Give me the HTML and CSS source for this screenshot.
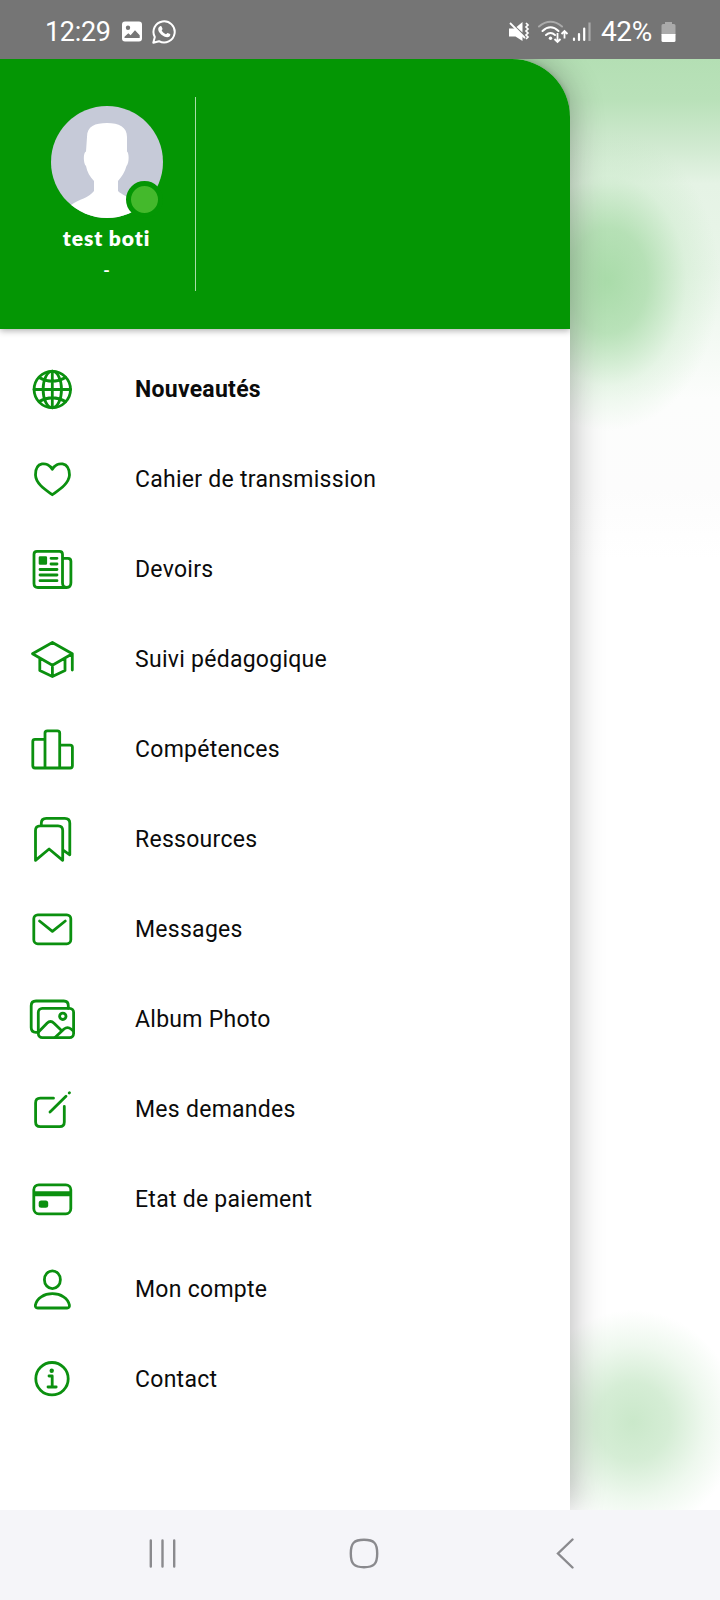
FILE: index.html
```html
<!DOCTYPE html>
<html lang="fr">
<head>
<meta charset="utf-8">
<title>Menu</title>
<link rel="stylesheet" href="styles.css">
</head>
<body>
<div class="screen">
  <header class="status">
    <div class="status-left">
      <span class="clock">12:29</span>
      <svg class="s-image" width="22" height="22" viewBox="0 0 22 22"><path fill="#fff" fill-rule="evenodd" d="M4 .5h14a3 3 0 0 1 3 3v14a3 3 0 0 1-3 3H4a3 3 0 0 1-3-3v-14a3 3 0 0 1 3-3zM7 4.500a2.200 2.200 0 1 0 0 4.400a2.200 2.200 0 1 0 0-4.400zM3.500 17h15.200v-2.800l-4.700-5-4.400 5-2.300-2-3.800 3.600z"/></svg>
      <svg class="s-whats" width="24" height="24" viewBox="0 0 24 24"><path fill="none" stroke="#fff" stroke-width="2" stroke-linejoin="round" d="M1.300 22.700l1.500-5.700A10.600 10.600 0 1 1 7 21.200z"/><path fill="#fff" d="M8 6.200c.8-.4 1.300-.2 1.600.4l.9 2.100c.2.600-.8 1.500-.8 1.800 1 1.900 2.400 3 4.200 3.700.5 0 1.200-1.400 1.700-1.300l2.500 1.200c.5.300.1 2-.9 2.700-3.600 2.100-11.500-3.500-11-8 .2-1.300.9-2.200 1.800-2.600z"/></svg>
    </div>
    <div class="status-right">
      <svg width="22" height="22" viewBox="0 0 22 22"><path fill="#fff" d="M1 7.500h3.500l3.500.1 6.500 6.500V20L7.500 15.500H1zM8.500 6L14.500 1v10.500z"/><path d="M2 2l15 15" stroke="#fff" stroke-width="1.800"/><path d="M18 2l2 2-2 2 2 2-2 2 2 2-2 2 2 2-2 2" fill="none" stroke="#fff" stroke-width="1.700"/></svg>
      <svg class="s-wifi" width="32" height="24" viewBox="0 0 32 24"><g fill="none" stroke="#fff" stroke-width="2" stroke-linecap="round"><path stroke="#aaa" d="M2 6.500Q13.500-3 25 6.500"/><path d="M5.500 11Q13.500 3.500 21.500 11M9 15Q13.500 11 18 15"/></g><circle cx="13.500" cy="18.200" r="1.700" fill="#fff"/><path fill="none" stroke="#fff" stroke-width="1.800" d="M20.500 13v9m-3-3l3 3 3-3M27.500 18.500v-7.500m-3 3l3-3 3 3"/></svg>
      <svg class="s-signal" width="20" height="22" viewBox="0 0 20 22"><path stroke="#fff" stroke-width="2.200" stroke-linecap="round" d="M2 17.500v1.500M7 13v6M12.200 7.500V19"/><path stroke="#aaa" stroke-width="2.200" d="M17.500 1.500V20"/></svg>
      <span class="battery">42%</span>
      <svg class="s-batt" width="15" height="20" viewBox="0 0 15 20"><path fill="#aaa" d="M4 0h7v2h2a1.500 1.500 0 0 1 1.500 1.500V13H.5V3.500A1.500 1.500 0 0 1 2 2h2z"/><path fill="#fff" d="M.5 12h14v6.500a1.500 1.500 0 0 1-1.500 1.500H2a1.500 1.500 0 0 1-1.500-1.500z"/></svg>
    </div>
  </header>
  <main class="stage">
    <aside class="drawer">
      <section class="profile">
        <div class="identity">
          <div class="avatar">
            <svg width="112" height="112" viewBox="0 0 112 112"><defs><clipPath id="round"><circle cx="56" cy="56" r="56"/></clipPath></defs><g clip-path="url(#round)"><path fill="#c6cad8" d="M0 0h112v112H0z"/><path fill="#fff" d="M36 31C36 20 44 17 56 17s20 4 20 14v14.500c2.200 1 2.300 12-.5 14.500-1.500 6-5 11-8.500 15v10c4 4 10 5.500 15 9 7 3 9 6 11 19H9l11-14c8-6 18-7 23-14V75c-4-4-7-9-8-15-3-3-2.800-13.500 0-14.500z"/></g></svg>
            <span class="online"></span>
          </div>
          <div class="name">test boti</div>
          <div class="class-name">-</div>
        </div>
      </section>
      <nav class="menu">
        <a class="item active"><svg class="icon" viewBox="0 0 56 56"><circle cx="28.300" cy="28.500" r="18.200"/><ellipse cx="28.300" cy="28.500" rx="9.200" ry="18.300"/><path d="M10 28.500h36.600M28.300 10.200v36.600M15 16.500Q28.300 24 41.600 16.500M15 40.500Q28.300 33 41.600 40.500"/></svg><span>Nouveautés</span></a>
        <a class="item"><svg class="icon" viewBox="0 0 56 56"><path d="M28.300 18.200C23.500 10.200 11.300 10.300 11.500 24C11.800 33 22.500 39.500 28.300 43.700C34.200 39.500 45 33 45.500 24C45.300 10.300 33 10.200 28.300 18.200z"/></svg><span>Cahier de transmission</span></a>
        <a class="item"><svg class="icon" viewBox="0 0 56 56"><path d="M43 46.500H14q-4 0-4-4V13.300q0-3 3-3h22.500q3 0 3 3v28.500q0 4.700 4.200 4.700t4.200-4.700V20.300q0-3-3-3h-5.400"/><path class="fill" d="M16 15.200h5.800a1.300 1.300 0 0 1 1.300 1.300v6a1.300 1.300 0 0 1-1.300 1.300H16a1.300 1.300 0 0 1-1.300-1.300v-6a1.300 1.300 0 0 1 1.300-1.300z"/><path d="M27 17.300h6M27 23h6M16 28.500h17M16 34h17M16 39.700h17"/></svg><span>Devoirs</span></a>
        <a class="item"><svg class="icon" viewBox="0 0 56 56"><path d="M8.500 22.800L28.400 11.500 48.300 22.800 28.400 34.300zM15.800 27.500v12l12.600 6 12.600-6v-12M28.400 34.500v11M48.300 23v16"/></svg><span>Suivi pédagogique</span></a>
        <a class="item"><svg class="icon" viewBox="0 0 56 56"><path d="M21 18.300H11q-2.200 0-2.200 2.200v24.300q0 2.200 2.200 2.200h35.200q2.200 0 2.200-2.200V26.300q0-2.200-2.200-2.200H36M21 47V12q0-2.200 2.400-2.200h9.900q2.400 0 2.400 2.200v35"/></svg><span>Compétences</span></a>
        <a class="item"><svg class="icon" viewBox="0 0 56 56"><path d="M11.500 49.300V19.500q0-4.700 4.700-4.700H34q4.700 0 4.700 4.700v29.800L25.100 38zM17.300 14.800v-2.500q0-5 5-5h18.500q5 0 5 5v31.500l-7-5"/></svg><span>Ressources</span></a>
        <a class="item"><svg class="icon" viewBox="0 0 56 56"><rect x="9.800" y="13.800" width="37" height="29" rx="4"/><path d="M15.500 20l12.900 10.300L41.300 20"/></svg><span>Messages</span></a>
        <a class="item"><svg class="icon" viewBox="0 0 56 56"><rect x="14.300" y="17.300" width="35.300" height="29.300" rx="4"/><path d="M14.300 41.300H12q-4.800 0-4.800-4.800V14.800q0-4.800 4.800-4.800h27.800q4.500 0 4.500 4.800v2.500M14.500 41l8.500-8.700q3.500-3.500 7 0l7 6.700M31 46.600l9-8.600q3.500-2.800 7 0l2.600 2.300"/><circle cx="38.800" cy="25.300" r="3.200"/></svg><span>Album Photo</span></a>
        <a class="item"><svg class="icon" viewBox="0 0 56 56"><path d="M29.500 17.200H16.300q-4.700 0-4.700 4.700v19q0 4.700 4.700 4.700h19.300q4.700 0 4.700-4.700V25.500M26 31l16-15.800M45.200 12l.3-.3"/></svg><span>Mes demandes</span></a>
        <a class="item"><svg class="icon" viewBox="0 0 56 56"><rect x="9.800" y="13.800" width="37" height="29" rx="5"/><path class="fill" d="M9.800 20.300h37v5H9.800z"/><rect class="fill" x="14.700" y="29.600" width="9.500" height="7.200" rx="2.500"/></svg><span>Etat de paiement</span></a>
        <a class="item"><svg class="icon" viewBox="0 0 56 56"><ellipse cx="28.400" cy="18.700" rx="8" ry="8.900"/><path d="M28.400 32.700c8.500 0 15.600 4.500 17 11.300.3 2-.5 3-2.300 3H13.700c-1.800 0-2.600-1-2.300-3 1.400-6.800 8.500-11.300 17-11.300z"/></svg><span>Mon compte</span></a>
        <a class="item"><svg class="icon" viewBox="0 0 56 56"><circle cx="28" cy="27.700" r="16.200"/><path d="M25 25h3.200v10.800M24 36h8.200"/><circle class="fill" cx="27.700" cy="19.700" r="2.200"/></svg><span>Contact</span></a>
      </nav>
    </aside>
  </main>
  <footer class="sysnav">
    <svg width="32" height="32" viewBox="0 0 32 32"><path d="M4.800 3.500v26M16.500 3.500v26M28.200 3.500v26"/></svg>
    <svg width="32" height="32" viewBox="0 0 32 32"><path d="M16 2.800C26 2.800 29.200 6 29.200 16.500S26 30.200 16 30.200 2.800 27 2.800 16.500 6 2.800 16 2.800z"/></svg>
    <svg width="32" height="32" viewBox="0 0 32 32"><path d="M23.500 2.500L9 16.500l14.500 14"/></svg>
  </footer>
</div>
</body>
</html>
```
FILE: styles.css
```css
* { box-sizing: border-box; }
body { margin: 0; font-family: Roboto, "Liberation Sans", sans-serif; }
.screen { width: 720px; height: 1600px; display: flex; flex-direction: column; overflow: hidden; background: #fff; }

.status { position: relative; z-index: 2; flex: none; height: 59px; padding: 4px 44px 0 45px; display: flex; justify-content: space-between; align-items: center; background: #757575; color: #fff; font-size: 27px; line-height: 32px; }
.status-left, .status-right { display: flex; align-items: center; }
.clock { width: 76px; letter-spacing: -0.3px; }
.s-whats { margin-left: 9px; }
.s-wifi { margin-left: 7px; }
.s-signal { margin-left: 3px; }
.battery { width: 57px; margin-left: 9px; font-size: 28px; letter-spacing: -0.4px; white-space: nowrap; }
.s-batt { margin-left: 3px; }

.stage {
  flex: 1; min-height: 0; display: flex;
  background:
    radial-gradient(ellipse 112px 150px at 608px 222px, rgba(158,215,158,.85) 0%, rgba(163,217,163,.72) 35%, rgba(190,230,190,.3) 70%, rgba(255,255,255,0) 100%),
    radial-gradient(ellipse 105px 112px at 633px 1363px, #cae8ca 0%, #d5edd5 35%, rgba(226,243,226,.6) 68%, rgba(255,255,255,0) 100%),
    linear-gradient(180deg, #b4dfb4 0, #b9e1b9 40px, #cfe9cf 85px, #e5f3e5 125px, #e9f5e9 210px, #f2f9f2 270px, #fcfdfc 340px, #fcfcfc 430px, #fff 500px);
}
.drawer { width: 570px; background: #fff; border-top-right-radius: 58px; box-shadow: 0 0 34px rgba(0,0,0,.32); }
.profile { height: 270px; padding: 38px 0 0; background: #049604; border-top-right-radius: 58px; box-shadow: 0 2px 6px rgba(0,0,0,.3); clip-path: inset(0 0 -12px 0); }
.identity { width: 196px; height: 194px; padding: 9px 0 0 18px; border-right: 1px solid #a9dca9; display: flex; flex-direction: column; align-items: center; color: #fff; }
.avatar { position: relative; width: 112px; height: 112px; }
.avatar svg { display: block; }
.online { position: absolute; right: 0; bottom: 0; width: 37px; height: 37px; border: 5px solid #049604; border-radius: 50%; background: #44b92c; }
.name { margin-top: 6px; font: 800 21px/28px Lato, sans-serif; letter-spacing: .9px; }
.class-name { margin-top: 7px; font-size: 18px; line-height: 24px; font-weight: 500; }

.menu { padding-top: 15px; }
.item { height: 90px; padding-left: 24px; display: flex; align-items: center; gap: 55px; color: #0b0b0b; font-size: 23px; letter-spacing: .27px; }
.active { font-weight: 700; }
.icon { flex: none; width: 56px; height: 56px; fill: none; stroke: #0b900f; stroke-width: 2.8; stroke-linecap: round; stroke-linejoin: round; }
.icon .fill { fill: #0b900f; stroke: none; }

.sysnav { position: relative; z-index: 2; flex: none; height: 90px; padding: 0 139px 0 146px; display: flex; align-items: center; justify-content: space-between; background: #f5f5f9; }
.sysnav svg { fill: none; stroke: #8a8a8e; stroke-width: 2.4; stroke-linecap: round; margin-top: -4px; }
```
